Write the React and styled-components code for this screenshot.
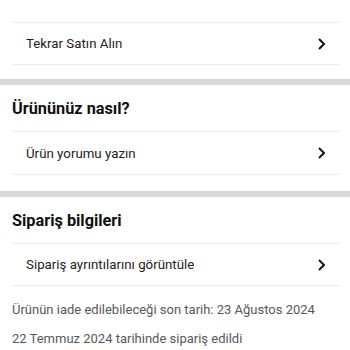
import React from 'react';
import styled, { createGlobalStyle } from 'styled-components';

const GlobalStyle = createGlobalStyle`
  body {
    margin: 0;
    background: #fff;
    font-family: Roboto, "Noto Sans", sans-serif;
    color: #0f1111;
  }
`;

const Page = styled.div`
  width: 350px;
  height: 350px;
  overflow: hidden;
  background: #fff;
`;

const Section = styled.div`
  padding: ${(p) => (p.$top ? `${p.$top}px` : '0')} 10px ${(p) => p.$bottom || 0}px 12px;
`;

const Heading = styled.h2`
  margin: 0;
  height: 46px;
  display: flex;
  align-items: center;
  font-size: 16.3px;
  font-weight: 700;
  color: #0f1111;
`;

const Row = styled.div`
  height: ${(p) => p.$h || 41}px;
  border-top: 1px solid #ececec;
  border-bottom: 1px solid #ececec;
  padding: 0 14px;
  display: flex;
  align-items: center;
  justify-content: space-between;
  font-size: 13.3px;
  color: #1f2121;
  cursor: pointer;
`;

const Band = styled.div`
  height: 6px;
  background: #d5d9d9;
`;

const Info = styled.div`
  padding: 9px 12px 0;
`;

const InfoLine = styled.p`
  margin: 0;
  line-height: 29px;
  font-size: 13px;
  color: #565959;
  white-space: nowrap;
`;

const Chevron = () => (
  <svg width="9" height="14" viewBox="0 0 9 14">
    <path d="M2 2 L7 7 L2 12" fill="none" stroke="#0f1111" strokeWidth="2" />
  </svg>
);

function LinkRow({ label, h }) {
  return (
    <Row $h={h}>
      <span>{label}</span>
      <Chevron />
    </Row>
  );
}

export default function App() {
  return (
    <Page>
      <GlobalStyle />
      <Section $top={22} $bottom={14}>
        <LinkRow label="Tekrar Satın Alın" />
      </Section>
      <Band />
      <Section $bottom={16}>
        <Heading>Ürününüz nasıl?</Heading>
        <LinkRow label="Ürün yorumu yazın" h={42} />
      </Section>
      <Band />
      <Section>
        <Heading>Sipariş bilgileri</Heading>
        <LinkRow label="Sipariş ayrıntılarını görüntüle" />
      </Section>
      <Info>
        <InfoLine>Ürünün iade edilebileceği son tarih: 23 Ağustos 2024</InfoLine>
        <InfoLine>22 Temmuz 2024 tarihinde sipariş edildi</InfoLine>
      </Info>
    </Page>
  );
}
